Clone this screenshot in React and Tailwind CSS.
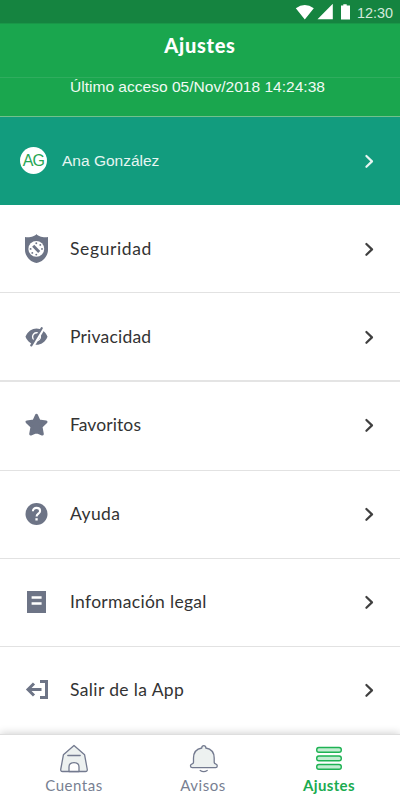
const ink = '#6d7486';

function Chevron({ className }) {
  return (
    <svg viewBox="0 0 10 16" className={`h-4 w-[10px] ${className}`} fill="none" stroke="currentColor" strokeWidth="2.2" strokeLinecap="round" strokeLinejoin="round">
      <path d="M2.400 3 8 8.400 2.400 13.800" />
    </svg>
  );
}

function ShieldIcon() {
  return (
    <svg viewBox="0 0 24 30" className="h-[30px] w-6">
      <path fill={ink} d="M12.500 0C11.300 2.200 6 3.900 1 3.100V15.700C1 21.700 5.500 27.700 12.500 29.100 19.500 27.700 24 21.700 24 15.700V3.100C19 3.900 13.700 2.200 12.500 0Z" />
      <circle cx="12.300" cy="14.900" r="7.900" fill="white" />
      <path d="m9.200 11.700 6 6.300" stroke={ink} strokeWidth="2.900" />
      <g fill={ink}>
        <circle cx="12.300" cy="9.300" r=".95" /><circle cx="16.300" cy="10.900" r=".95" />
        <circle cx="18" cy="14.900" r=".95" /><circle cx="12.300" cy="20.600" r=".95" />
        <circle cx="8.300" cy="18.900" r=".95" /><circle cx="6.600" cy="14.900" r=".95" />
      </g>
    </svg>
  );
}

function PrivacyIcon() {
  return (
    <svg viewBox="0 0 24 20" className="h-5 w-6">
      <path fill={ink} d="M1.500 9.700C6-1.100 19-1.100 23.500 9.700 19 20.500 6 20.500 1.500 9.700Z" />
      <circle cx="12.500" cy="9.700" r="3.900" fill="none" stroke="white" strokeWidth="1.400" />
      <path d="M8.200 19.700 19.200 1.100" stroke="white" strokeWidth="3.800" />
      <path d="M7.300 18.400 17.700 1.200" stroke={ink} strokeWidth="2.200" strokeLinecap="round" />
    </svg>
  );
}

function StarIcon() {
  return (
    <svg viewBox="0 0 24 24" className="size-6">
      <path fill={ink} stroke={ink} strokeWidth="3" strokeLinejoin="round" d="m12.500 2.400 2.600 5.700 6.900.8-5 4.800 1.300 7.300-5.800-2.500-5.800 2.500 1.300-7.300-5-4.800 6.900-.8Z" />
    </svg>
  );
}

function HelpIcon() {
  return (
    <svg viewBox="0 0 24 24" className="size-6">
      <circle cx="12.500" cy="12" r="11" fill={ink} />
      <path d="M8.900 9.300C8.900 7.100 10.500 5.900 12.500 5.900s3.600 1.200 3.600 3.100c0 2.700-3.500 2.700-3.500 5.500" fill="none" stroke="white" strokeWidth="2.100" />
      <rect x="11.400" y="16.200" width="2.300" height="2.300" fill="white" />
    </svg>
  );
}

function LegalIcon() {
  return (
    <svg viewBox="0 0 24 24" className="size-6">
      <rect x="3" y="1" width="19" height="22" fill={ink} />
      <path d="M7.600 7.500h10M7.600 13.500h10" stroke="white" strokeWidth="2.500" />
    </svg>
  );
}

function ExitIcon() {
  return (
    <svg viewBox="0 0 24 24" className="size-6" fill="none" stroke={ink} strokeWidth="3">
      <path d="M10 5.500 4 11.500l6 6M4 11.500h13.500M16 3.500h6.500v16H16" />
    </svg>
  );
}

const rows = [
  { label: 'Seguridad', icon: <ShieldIcon />, size: 'h-[88px]', track: 'tracking-[0.62px]' },
  { label: 'Privacidad', icon: <PrivacyIcon />, size: 'h-[89px]', track: 'tracking-[0.2px]' },
  { label: 'Favoritos', icon: <StarIcon />, size: 'h-[89px] pb-0.5', track: 'tracking-[0.1px]' },
  { label: 'Ayuda', icon: <HelpIcon />, size: 'h-[88px] pb-0.5', track: 'tracking-[0.4px]' },
  { label: 'Información legal', icon: <LegalIcon />, size: 'h-[88px] pb-0.5', track: 'tracking-[0.3px]' },
  { label: 'Salir de la App', icon: <ExitIcon />, size: 'h-[87px] pb-0.5', track: 'tracking-[0.38px]' },
];

function HouseIcon() {
  return (
    <svg viewBox="0 0 30 30" className="size-[30px]" fill="#edf1f0" stroke="#737a8f" strokeWidth="1.300" strokeLinejoin="round" strokeLinecap="round">
      <path d="M15 1.500 25.600 10.800 28.200 25Q28.700 27.500 26.400 27.500H3.600Q1.300 27.500 1.800 25L4.400 10.800Z" />
      <path d="M8.800 11.500h12.400" />
      <path fill="white" d="M10 27.500v-4.500q0-4.300 5-4.300t5 4.300V27.500Z" />
    </svg>
  );
}

function BellIcon() {
  return (
    <svg viewBox="0 0 30 30" className="size-[30px]" fill="#edf1f0" stroke="#737a8f" strokeWidth="1.300" strokeLinejoin="round" strokeLinecap="round">
      <path d="M13.800 4C13.500.8 18.100.8 17.800 4 23.500 5 26.200 9.300 26.200 14.100v4.200q0 1.200 1.300 1.500c2.600.8 2 3.900 .2 3.900H4.200c-2 0-2.600-3.100 0-3.900Q5.500 19.500 5.500 18.300v-4.200C5.500 9.300 8.100 5 13.800 4Z" />
      <path fill="none" d="M12.200 26.500q3.500 2.200 7 0" />
    </svg>
  );
}

function MenuIcon() {
  return (
    <svg viewBox="0 0 30 30" className="size-[30px]" fill="#c3edd2" stroke="#1eb253" strokeWidth="1.400">
      <rect x="2.700" y="3.500" width="24.600" height="4.700" rx="2.200" />
      <rect x="2.700" y="12" width="24.600" height="4.700" rx="2.200" />
      <rect x="2.700" y="20.500" width="24.600" height="4.700" rx="2.200" />
    </svg>
  );
}

export default function App() {
  return (
    <div className="flex h-[800px] w-[400px] flex-col overflow-hidden bg-white font-['Lato',sans-serif]">
      <div className="flex h-[23px] shrink-0 items-center justify-end bg-[#158440] pr-[7px] text-white">
        <svg viewBox="0 0 56 18" className="mr-[6px] h-[18px] w-14" fill="currentColor">
          <path d="M.8 5.200Q9.800-1 18.800 5.200L9.800 16.500ZM22.500 16.300 37.800.8v15.500ZM46 2.500h2.300V1.200h3.400v1.300H55v14h-9Z" />
        </svg>
        <span className="pt-[3px] font-['Liberation_Sans',sans-serif] text-[14.400px] leading-5 text-[#d4eadc]">12:30</span>
      </div>
      <header className="h-[54px] shrink-0 border-t border-[#199748] bg-[#1aa64e] pt-[7px] text-center text-[20px] leading-7 font-black tracking-[0.7px] text-white">
        <h1>Ajustes</h1>
      </header>
      <div className="h-[40px] shrink-0 border-t border-b border-t-[#2fad5e] border-b-[#72c18c] bg-[#1aa64e] pl-[70px] font-['Liberation_Sans',sans-serif] text-[15.550px] leading-[17px] whitespace-nowrap text-[#f1faf4]">
        Último acceso 05/Nov/2018 14:24:38
      </div>
      <div className="flex h-[88px] shrink-0 items-center bg-[#129c7e] pr-[26px] pl-5 font-['Liberation_Sans',sans-serif]">
        <div className="mb-px flex size-[27px] items-center justify-center rounded-full bg-white text-[16px] tracking-[-0.700px] text-[#28a653]">AG</div>
        <span className="ml-[15px] text-[15.500px] text-[#e6f5f1]">Ana González</span>
        <Chevron className="ml-auto text-[#e6f5f1]" />
      </div>
      <main>
        {rows.map((row, i) => (
          <div key={row.label} className={`flex items-center pr-[26px] pl-6 ${row.size} ${i === 5 ? '' : i === 1 ? 'border-b-2 border-[#e4e4e4]' : 'border-b border-[#e2e2e2]'}`}>
            {row.icon}
            <span className={`ml-[22px] text-[17.500px] leading-6 text-[#333333] ${row.track}`}>{row.label}</span>
            <Chevron className="ml-auto text-[#404040]" />
          </div>
        ))}
      </main>
      <nav className="relative flex h-[66px] shrink-0 border-t border-[#dedede] bg-white pt-[9px] text-[15px] leading-5 text-[#787f92] shadow-[0_-1px_8px_rgba(0,0,0,0.18)]">
        <div className="ml-[34px] flex w-20 flex-col items-center"><HouseIcon /><span className="mt-px tracking-[0.5px]">Cuentas</span></div>
        <div className="ml-[49px] flex w-20 flex-col items-center"><BellIcon /><span className="mt-px tracking-[0.5px]">Avisos</span></div>
        <div className="ml-[46px] flex w-20 flex-col items-center"><MenuIcon /><span className="mt-px font-bold tracking-[0.35px] text-[#1aab50]">Ajustes</span></div>
      </nav>
    </div>
  );
}
